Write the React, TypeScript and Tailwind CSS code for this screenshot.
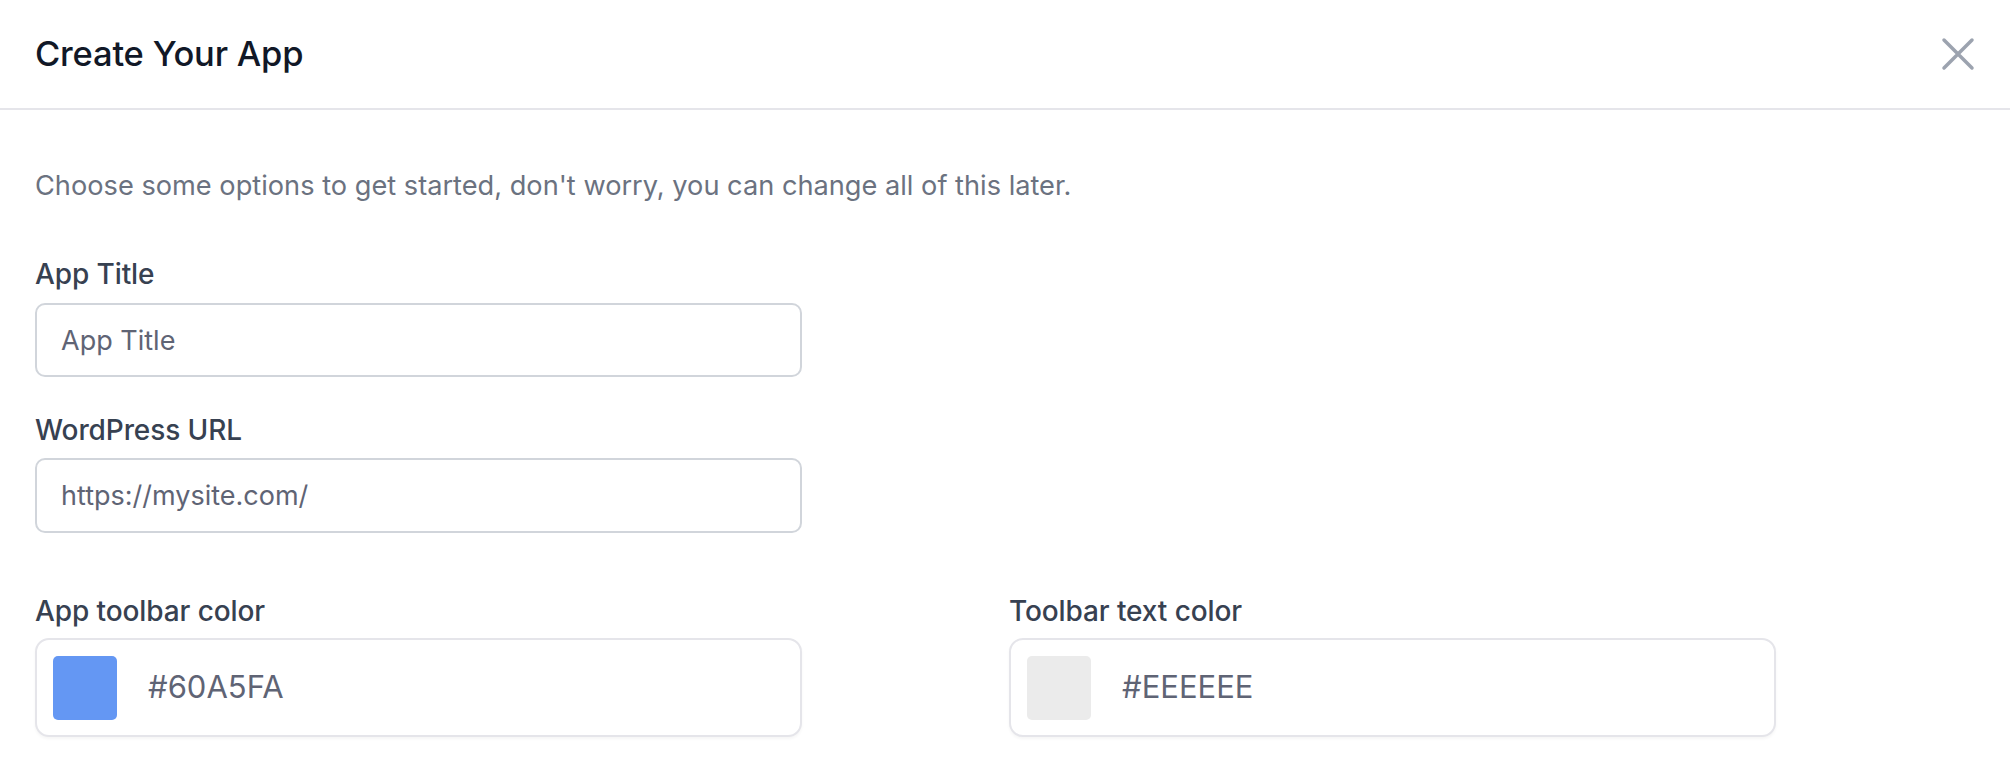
import { useState } from "react";

function ColorField({ label, value, swatch }: { label: string; value: string; swatch: string }) {
  return (
    <div className="w-[767px]">
      <label className="block text-[28px] leading-[40px] font-medium text-[#374151] tracking-[-0.1px]">{label}</label>
      <div className="mt-[7px] h-[99px] flex items-center gap-[31px] px-[16px] rounded-[14px] border-2 border-[#e5e5ea] bg-white shadow-[0_2px_3px_rgba(0,0,0,0.04)]">
        <div className="w-[64px] h-[64px] rounded-[5px]" style={{ background: swatch }} />
        <span className="text-[31px] text-[#5f6475]">{value}</span>
      </div>
    </div>
  );
}

export default function App() {
  const [title, setTitle] = useState("");
  const [url, setUrl] = useState("https://mysite.com/");

  return (
    <div className="w-[2010px] h-[784px] bg-white font-['Inter',sans-serif] overflow-hidden">
      {/* Header */}
      <div className="h-[110px] flex items-center justify-between pl-[35px] pr-[24px] border-b-2 border-[#e5e5ea]">
        <h2 className="text-[34.5px] font-medium text-[#111827] tracking-[-0.2px]">Create Your App</h2>
        <button aria-label="Close" className="text-[#9ca3af]">
          <svg width="56" height="56" viewBox="0 0 24 24" fill="none" stroke="currentColor" strokeWidth={1.5} strokeLinecap="round">
            <path d="M6 18 18 6M6 6l12 12" />
          </svg>
        </button>
      </div>

      {/* Body */}
      <div className="px-[35px] pt-[56px]">
        <p className="text-[27.2px] leading-[40px] text-[#6b7280]">
          Choose some options to get started, don't worry, you can change all of this later.
        </p>

        <div className="mt-[48px] w-[767px]">
          <label className="block text-[28px] leading-[40px] font-medium text-[#374151] tracking-[-0.1px]">App Title</label>
          <input
            value={title}
            onChange={(e) => setTitle(e.target.value)}
            placeholder="App Title"
            className="mt-[9px] w-full h-[74px] px-[24px] rounded-[10px] border-2 border-[#d1d5db] text-[27px] text-[#5f6475] placeholder-[#5f6475] outline-none"
          />
        </div>

        <div className="mt-[33px] w-[767px]">
          <label className="block text-[28px] leading-[40px] font-medium text-[#374151] tracking-[-0.1px]">WordPress URL</label>
          <input
            value={url}
            onChange={(e) => setUrl(e.target.value)}
            className="mt-[8px] w-full h-[75px] px-[24px] rounded-[10px] border-2 border-[#d1d5db] text-[27px] text-[#5f6475] outline-none"
          />
        </div>

        <div className="mt-[58px] flex gap-[207px]">
          <ColorField label="App toolbar color" value="#60A5FA" swatch="#6497f3" />
          <ColorField label="Toolbar text color" value="#EEEEEE" swatch="#ebebeb" />
        </div>
      </div>
    </div>
  );
}
